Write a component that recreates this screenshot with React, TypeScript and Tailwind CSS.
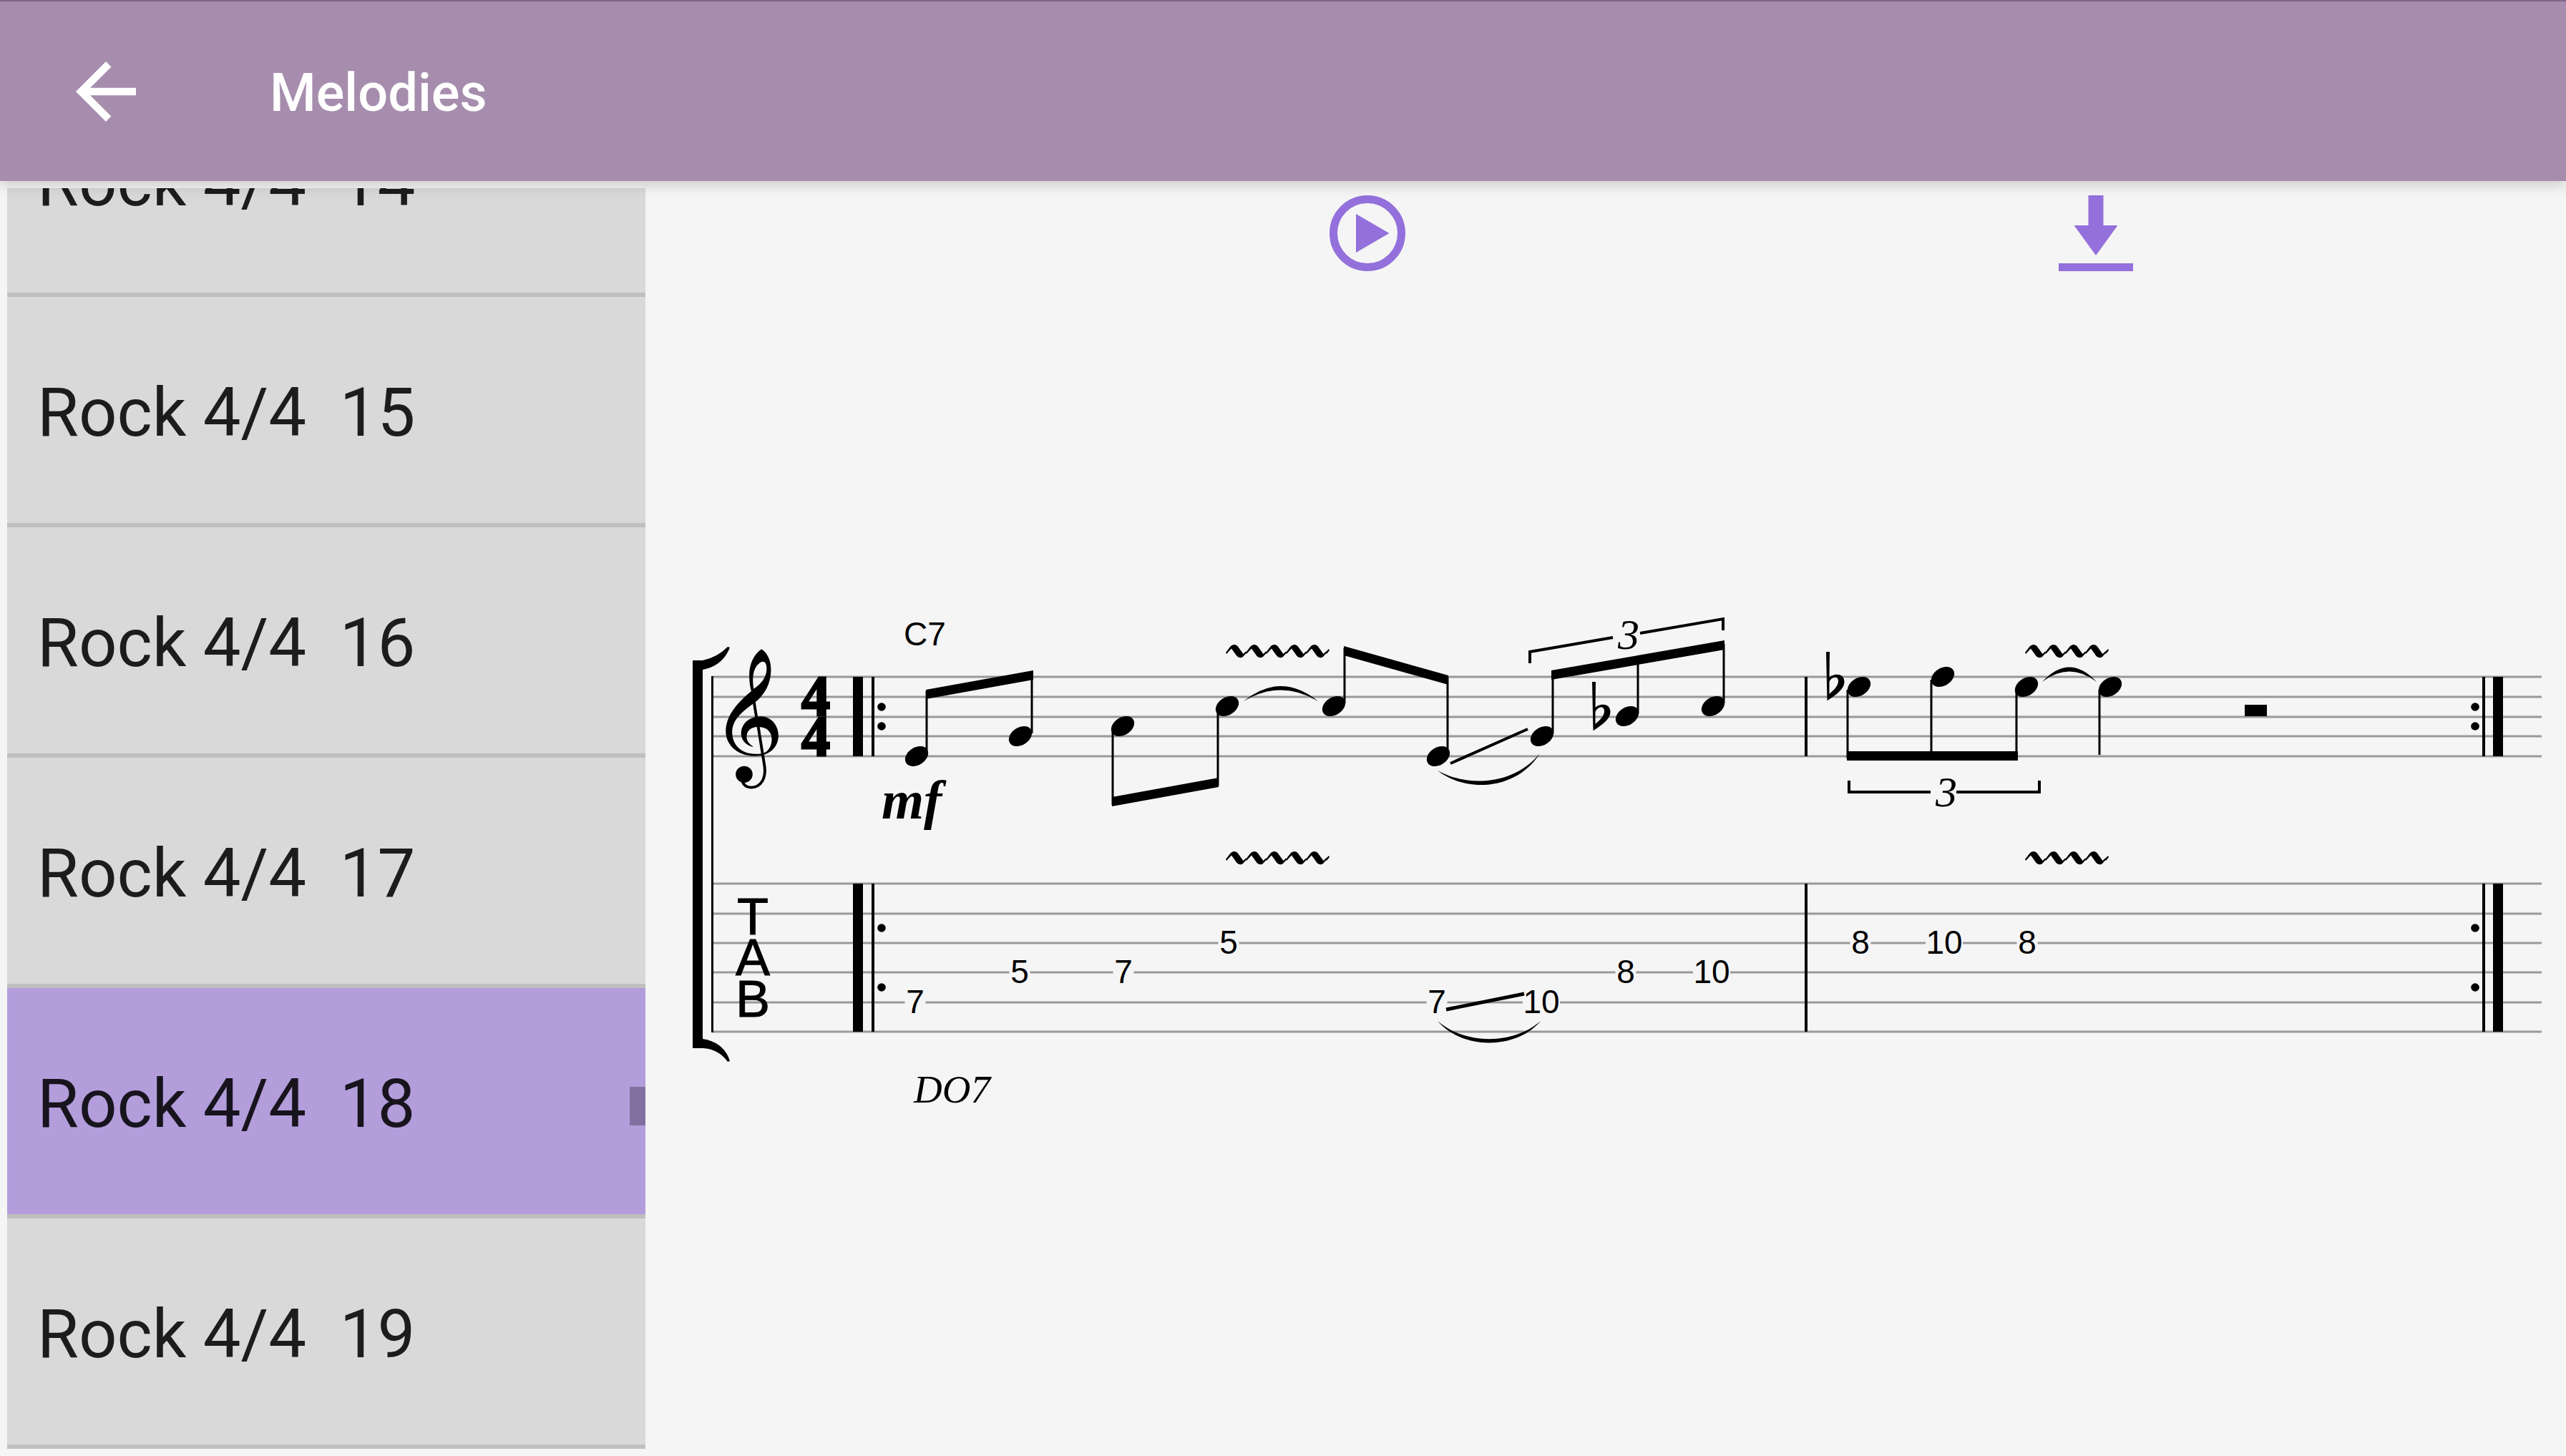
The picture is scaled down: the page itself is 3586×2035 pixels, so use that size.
import React, { useState } from 'react'

interface Melody {
  id: number
  style: string
  meter: string
}

interface Beam {
  from: [number, number]
  to: [number, number]
}

const melodies: Melody[] = [14, 15, 16, 17, 18, 19].map((id) => ({ id, style: 'Rock', meter: '4/4' }))

const staffLines = [946, 974, 1002, 1029, 1057]
const tabLines = [1235, 1277, 1318, 1359, 1401, 1442]

const noteHeads: [number, number][] = [
  [1281, 1057],
  [1426, 1029],
  [1569, 1015],
  [1715, 987],
  [1864, 987],
  [2010, 1057],
  [2155, 1029],
  [2274, 1001],
  [2394, 987],
  [2598, 960],
  [2715, 946],
  [2832, 960],
  [2949, 960],
]

// x, top, bottom
const stems: [number, number, number][] = [
  [1295, 966, 1053],
  [1442, 940, 1025],
  [1555, 1019, 1125],
  [1702, 991, 1098],
  [1879, 906, 983],
  [2023, 946, 1053],
  [2170, 940, 1025],
  [2289, 920, 997],
  [2409, 900, 983],
  [2582, 964, 1060],
  [2699, 950, 1060],
  [2818, 964, 1060],
  [2934, 964, 1055],
]

// top edge of each beam
const beams: Beam[] = [
  { from: [1294, 964], to: [1444, 937] },
  { from: [1554, 1114], to: [1703, 1087] },
  { from: [1878, 903], to: [2024, 944] },
  { from: [2168, 937], to: [2410, 895] },
  { from: [2581, 1050], to: [2820, 1050] },
]

const frets: { x: number; string: number; fret: string }[] = [
  { x: 1279, string: 5, fret: '7' },
  { x: 1425, string: 4, fret: '5' },
  { x: 1570, string: 4, fret: '7' },
  { x: 1717, string: 3, fret: '5' },
  { x: 2008, string: 5, fret: '7' },
  { x: 2154, string: 5, fret: '10' },
  { x: 2272, string: 4, fret: '8' },
  { x: 2392, string: 4, fret: '10' },
  { x: 2600, string: 3, fret: '8' },
  { x: 2717, string: 3, fret: '10' },
  { x: 2833, string: 3, fret: '8' },
]

function Vibrato({ x, y, count }: { x: number; y: number; count: number }) {
  return (
    <g transform={`translate(${x} ${y})`}>
      {Array.from({ length: count }, (_, i) => (
        <path
          key={i}
          transform={`translate(${i * 28} 0)`}
          d="M0 11 L7 2 Q12 -2 16.500 2 L24.500 13 L28 9.500 L29.500 11 L24 17 Q20 20 15.500 16 L8 5.500 L1 13Z"
        />
      ))}
      <path d={`M${count * 28} 10 L${count * 28 + 4} 6 L${count * 28 + 5} 8 L${count * 28 + 1} 13Z`} />
    </g>
  )
}

function Flat({ x, y }: { x: number; y: number }) {
  return (
    <path
      transform={`translate(${x} ${y})`}
      fillRule="evenodd"
      d="M0 0 H5 L4.500 36 C9 31 25 28 25.500 42 C25.500 52 14 60 2 68 H1.500Z M4.500 42 L4.500 59 C10 54 17 48 17 41 C17 33 8 34 4.500 42Z"
    />
  )
}

function TrebleClef() {
  return (
    <g transform="translate(940 840) scale(.357 .3333)">
      <path
        fillRule="evenodd"
        d="M348 202 C315 225 300 270 300 310 C300 340 304 365 308 378 C255 425 208 480 208 545 C208 610 260 650 320 650 C335 650 345 649 352 646 C395 635 414 600 414 565 C414 520 385 484 345 484 C300 484 268 515 268 555 C268 585 290 608 317 612 C300 600 288 585 290 565 C292 540 310 528 335 528 C370 528 388 550 388 580 C388 612 372 635 350 640 C340 642 330 642 322 641 C270 640 233 605 233 548 C233 500 270 465 320 427 C360 395 385 345 385 290 C385 245 368 215 348 202Z M317 368 C310 320 315 270 350 254 C362 253 368 262 368 285 C368 320 345 350 317 368Z"
      />
      <path
        d="M316 400 C322 460 335 520 340 560 L358 680 C370 745 345 780 307 782 C290 782 278 772 272 755"
        fill="none"
        stroke="black"
        strokeWidth="11"
      />
      <ellipse cx="280" cy="727" rx="33" ry="35" />
    </g>
  )
}

function RepeatBar({ thick, thin, dots }: { thick: number; thin: number; dots: number }) {
  return (
    <g>
      {[staffLines, tabLines].map((lines, i) => {
        const top = lines[0]
        const height = lines[lines.length - 1] - top
        return (
          <g key={i}>
            <rect x={thick} y={top} width="14" height={height} />
            <rect x={thin} y={top} width="4" height={height} />
          </g>
        )
      })}
      {[988, 1015, 1297, 1380].map((y) => (
        <circle key={y} cx={dots} cy={y} r="5.8" />
      ))}
    </g>
  )
}

function Score() {
  return (
    <svg viewBox="902 820 2684 760" className="block w-full" role="img" aria-label="C7 melody with guitar tablature">
      <g stroke="#999999" strokeWidth="3">
        {[...staffLines, ...tabLines].map((y) => (
          <line key={y} x1="996" x2="3552" y1={y} y2={y} />
        ))}
      </g>

      {/* system bracket */}
      <path d="M968 923 H982 Q1002 919 1017 904 L1020 905 Q1010 931 982 936 V1452 Q1012 1457 1020 1483 L1017 1484 Q1004 1466 982 1465 H968Z" />
      <rect x="994" y="945" width="3" height="498" />
      <TrebleClef />
      <g
        className="font-['Liberation_Serif',serif] text-[80px] font-bold"
        textAnchor="middle"
        stroke="black"
        strokeWidth="3"
      >
        <text x="1140" y="1000">4</text>
        <text x="1140" y="1056">4</text>
      </g>
      <g
        className="font-['Liberation_Sans',sans-serif] text-[72px]"
        textAnchor="middle"
        stroke="black"
        strokeWidth="1"
      >
        <text x="1052" y="1306">T</text>
        <text x="1052" y="1363">A</text>
        <text x="1052" y="1421">B</text>
      </g>

      <RepeatBar thick={1192} thin={1218} dots={1232} />
      <RepeatBar thick={3484} thin={3469} dots={3459} />
      <rect x="2522" y="946" width="4" height="111" />
      <rect x="2522" y="1235" width="4" height="207" />

      {noteHeads.map(([x, y]) => (
        <ellipse key={x} cx={x} cy={y} rx="17.5" ry="12.3" transform={`rotate(-33 ${x} ${y})`} />
      ))}
      <g stroke="black" strokeWidth="3">
        {stems.map(([x, top, bottom]) => (
          <line key={x} x1={x} x2={x} y1={top} y2={bottom} />
        ))}
      </g>
      {beams.map(({ from, to }) => (
        <polygon
          key={from[0]}
          points={`${from[0]},${from[1]} ${to[0]},${to[1]} ${to[0]},${to[1] + 13} ${from[0]},${from[1] + 13}`}
        />
      ))}
      <Flat x={2225} y={953} />
      <Flat x={2552} y={911} />
      <rect x="3137" y="985" width="31" height="16" />

      {/* ties and slides */}
      <path d="M1738 980 Q1790 938 1842 980 Q1790 949 1738 980Z" />
      <path d="M2854 953 Q2892 912 2930 953 Q2892 924 2854 953Z" />
      <path d="M2009 1077 C2050 1109 2120 1104 2152 1053 C2116 1097 2052 1101 2009 1077Z" />
      <path d="M2009 1427 C2044 1468 2120 1467 2153 1427 C2116 1460 2048 1461 2009 1427Z" />
      <line x1="2027" y1="1067" x2="2135" y2="1019" stroke="black" strokeWidth="4" />

      <Vibrato x={1713} y={901} count={5} />
      <Vibrato x={2830} y={901} count={4} />
      <Vibrato x={1713} y={1190} count={5} />
      <Vibrato x={2830} y={1190} count={4} />

      {/* triplets */}
      <g fill="none" stroke="black" strokeWidth="4">
        <path d="M2138 927 V911 L2254 891" />
        <path d="M2292 885 L2408 865 V881" />
        <path d="M2584 1091 V1107 H2698" />
        <path d="M2734 1107 H2850 V1091" />
      </g>
      <g className="font-['Liberation_Serif',serif] text-[60px] italic">
        <text x="2261" y="907">3</text>
        <text x="2705" y="1127">3</text>
      </g>

      {frets.map(({ x, string, fret }) => {
        const y = tabLines[string - 1]
        const width = fret.length === 2 ? 52 : 29
        return (
          <g key={x} className="font-['Liberation_Sans',sans-serif] text-[46px]" textAnchor="middle">
            <rect x={x - width / 2} y={y - 3} width={width} height="6" fill="#f5f5f5" />
            <text x={x} y={y + 15}>{fret}</text>
          </g>
        )
      })}
      <line x1="2021" y1="1411" x2="2130" y2="1389" stroke="black" strokeWidth="5" />

      <text x="1263" y="902" className="font-['Liberation_Sans',sans-serif] text-[46px]">C7</text>
      <text x="1232" y="1144" className="font-['Liberation_Serif',serif] text-[76px] font-bold italic">mf</text>
      <text x="1277" y="1541" className="font-['Liberation_Serif',serif] text-[55px] italic">DO7</text>
    </svg>
  )
}

function App() {
  const [selected, setSelected] = useState(18)

  return (
    <div className="flex h-screen flex-col overflow-hidden bg-[#f5f5f5] font-[Roboto,sans-serif]">
      <header className="relative z-10 flex h-[253px] shrink-0 items-center border-t-2 border-[#7f6488] bg-[#a68dad] pl-[85px] text-white shadow-[0_4px_20px_rgba(0,0,0,0.2)]">
        <button type="button" aria-label="Back">
          <svg viewBox="0 0 24 24" className="size-[126px] fill-current">
            <path d="M20 11H7.830l5.590-5.590L12 4l-8 8 8 8 1.410-1.410L7.830 13H20v-2z" />
          </svg>
        </button>
        <h1 className="ml-[166px] pt-1 text-[74px] leading-[90px] font-medium">Melodies</h1>
      </header>

      <div className="flex min-h-0 flex-1">
        <nav className="mt-[10px] mb-[10px] ml-[10px] flex w-[892px] shrink-0 flex-col justify-end overflow-hidden">
          {melodies.map(({ id, style, meter }) => (
            <button
              key={id}
              type="button"
              aria-pressed={id === selected}
              onClick={() => setSelected(id)}
              className={`relative flex h-[322px] shrink-0 items-center border-b-6 border-[#bfbfbf] pt-2 pl-[42px] text-left text-[94px] leading-[112px] whitespace-pre text-black/87 ${
                id === selected ? 'bg-[#b39ddb]' : 'bg-[#d9d9d9]'
              }`}
            >
              {`${style} ${meter}  ${id}`}
              {id === 18 && <span className="absolute top-[138px] right-0 h-[54px] w-[22px] bg-[#8370a0]" />}
            </button>
          ))}
        </nav>

        <main className="min-w-0 flex-1">
          <div className="grid grid-cols-2 justify-items-center pt-5 pr-[148px] pl-[500px] text-[#9370db]">
            <button type="button" aria-label="Play">
              <svg viewBox="0 0 106 106" className="size-[106px]">
                <circle cx="53" cy="53" r="47.5" fill="none" stroke="currentColor" strokeWidth="11" />
                <path d="M37 26 L83.500 53 L37 80Z" fill="currentColor" />
              </svg>
            </button>
            <button type="button" aria-label="Download">
              <svg viewBox="0 0 106 106" className="size-[106px] fill-current">
                <path d="M42.500 0 H63.500 V42 H83.500 L53 84 L22.500 42 H42.500Z" />
                <rect x="1" y="95" width="104" height="11" />
              </svg>
            </button>
          </div>
          <div className="pt-[441px]">
            <Score />
          </div>
        </main>
      </div>
    </div>
  )
}

export default App
